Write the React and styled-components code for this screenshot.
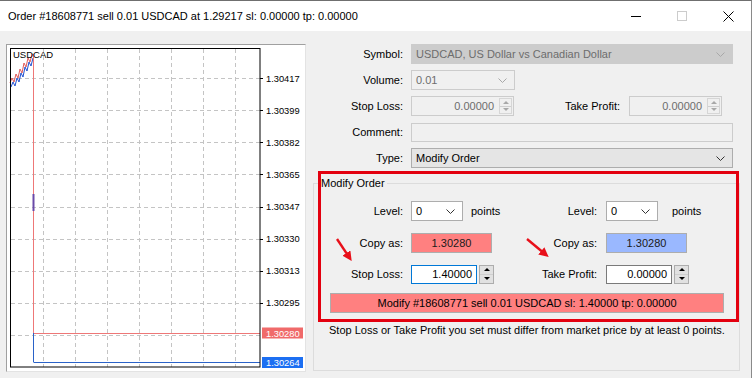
import React from "react";
import styled, { createGlobalStyle } from "styled-components";

const Global = createGlobalStyle`
  html, body {
    margin: 0;
    padding: 0;
  }
  body {
    font-family: "Liberation Sans", Arial, sans-serif;
    font-size: 11px;
    color: #000;
    background: #ffffff;
  }
`;

const gridY = [0, 1, 2, 3, 4, 5, 6, 7, 8].map((k) => 33.3 + 32.05 * k);
const gridX = [36, 68, 100, 132, 164, 196, 228];
const prices = ["1.30417", "1.30399", "1.30382", "1.30365", "1.30347", "1.30330", "1.30313", "1.30295"];

const redZig = "3,38 5,33 7,37 9,29 11,33 13,24 15,28 17,18 19,22 21,13 23,17 25,9";
const blueZig = "4,42 6,37 8,41 10,33 12,37 14,28 16,32 18,22 20,26 22,17 24,21 26,13";

const Chevron = ({ color = "#333" }) => (
  <svg width="9" height="5" viewBox="0 0 9 5">
    <polyline points="0.5,0.5 4.5,4.5 8.5,0.5" fill="none" stroke={color} strokeWidth="1" />
  </svg>
);

const Arrow = ({ left, top, w, h }) => (
  <ArrowWrap style={{ left, top }}>
    <svg width={w + 6} height={h + 6} viewBox={`-3 -3 ${w + 6} ${h + 6}`}>
      <defs>
        <marker id={`ah${left}`} markerWidth="4" markerHeight="4" refX="2" refY="2" orient="auto">
          <path d="M0,0 L4,2 L0,4 Z" fill="#e8101a" />
        </marker>
      </defs>
      <line x1="0" y1="0" x2={w - 4} y2={h - 5} stroke="#e8101a" strokeWidth="2.4" markerEnd={`url(#ah${left})`} />
    </svg>
  </ArrowWrap>
);

const SpinButtons = ({ disabled }) => (
  <Spin $disabled={disabled}>
    <SpinHalf><TriUp $disabled={disabled} /></SpinHalf>
    <SpinHalf><TriDown $disabled={disabled} /></SpinHalf>
  </Spin>
);

const App = () => {
  return (
    <>
      <Global />
      <Window>
        <TitleBar>
          <Title>Order #18608771 sell 0.01 USDCAD at 1.29217 sl: 0.00000 tp: 0.00000</Title>
          <WinButtons>
            <WinBtn>
              <svg width="10" height="10"><line x1="0" y1="5.5" x2="10" y2="5.5" stroke="#000" /></svg>
            </WinBtn>
            <WinBtn>
              <svg width="10" height="10"><rect x="0.5" y="0.5" width="9" height="9" fill="none" stroke="#cccccc" /></svg>
            </WinBtn>
            <WinBtn>
              <svg width="11" height="11">
                <line x1="0.5" y1="0.5" x2="10.5" y2="10.5" stroke="#000" />
                <line x1="10.5" y1="0.5" x2="0.5" y2="10.5" stroke="#000" />
              </svg>
            </WinBtn>
          </WinButtons>
        </TitleBar>

        <Body>
          <ChartFrame>
            <svg width="298" height="326" viewBox="0 0 298 326">
              <rect x="0" y="0" width="298" height="326" fill="#ffffff" />
              {gridY.map((y) => (
                <line key={`h${y}`} x1="4" x2="253" y1={Math.round(y) + 0.5} y2={Math.round(y) + 0.5} stroke="#c4c4c4" strokeDasharray="4 3" />
              ))}
              {gridX.map((x) => (
                <line key={`v${x}`} x1={x + 0.5} x2={x + 0.5} y1="4" y2="322" stroke="#c4c4c4" strokeDasharray="4 3" />
              ))}
              <polyline points={redZig} fill="none" stroke="#e05a5a" strokeWidth="1" />
              <polyline points={blueZig} fill="none" stroke="#2050d0" strokeWidth="1" />
              <line x1="26.5" x2="26.5" y1="9" y2="288" stroke="#ee7777" />
              <line x1="26.5" x2="253" y1="288.5" y2="288.5" stroke="#ee7777" />
              <line x1="26.5" x2="26.5" y1="288" y2="317" stroke="#2a62c8" />
              <line x1="26.5" x2="253" y1="317.5" y2="317.5" stroke="#2a62c8" />
              <line x1="26.5" x2="26.5" y1="149" y2="166" stroke="#6a4aa8" strokeWidth="2" />
              <rect x="3.5" y="3.5" width="249.5" height="318.5" fill="none" stroke="#000" />
              {prices.map((p, i) => (
                <g key={p}>
                  <line x1="253" x2="256" y1={Math.round(gridY[i]) + 0.5} y2={Math.round(gridY[i]) + 0.5} stroke="#000" />
                  <text x="259" y={gridY[i] + 3.5} fontSize="9.3" fontFamily="Liberation Sans, Arial, sans-serif" fill="#000">{p}</text>
                </g>
              ))}
              <rect x="255" y="282.5" width="41" height="11" fill="#f06a6a" />
              <text x="259" y="291.5" fontSize="9.3" fontFamily="Liberation Sans, Arial, sans-serif" fill="#fff">1.30280</text>
              <rect x="255" y="312" width="41" height="11" fill="#1c6ff2" />
              <text x="259" y="321" fontSize="9.3" fontFamily="Liberation Sans, Arial, sans-serif" fill="#fff">1.30264</text>
              <text x="6" y="13" fontSize="9.5" fontFamily="Liberation Sans, Arial, sans-serif" fill="#000">USDCAD</text>
            </svg>
          </ChartFrame>

          <Form>
            <FormRow>
              <Label $w={90}>Symbol:</Label>
              <Select $w={322} $variant="disabled">
                <span>USDCAD, US Dollar vs Canadian Dollar</span>
                <Chevron color="#a8a8a8" />
              </Select>
            </FormRow>
            <FormRow>
              <Label $w={90}>Volume:</Label>
              <Select $w={104} $variant="soft">
                <span>0.01</span>
                <Chevron color="#a8a8a8" />
              </Select>
            </FormRow>
            <FormRow>
              <Label $w={90}>Stop Loss:</Label>
              <DisabledSpin $w={103}>
                <SpinText>0.00000</SpinText>
                <SpinButtons disabled />
              </DisabledSpin>
              <Label $w={106} $gap={9}>Take Profit:</Label>
              <DisabledSpin $w={93}>
                <SpinText>0.00000</SpinText>
                <SpinButtons disabled />
              </DisabledSpin>
            </FormRow>
            <FormRow>
              <Label $w={90}>Comment:</Label>
              <TextBox $w={322} />
            </FormRow>
            <FormRow>
              <Label $w={90}>Type:</Label>
              <Select $w={322} $variant="normal">
                <span>Modify Order</span>
                <Chevron color="#333" />
              </Select>
            </FormRow>

            <GroupBox>
              <Legend>Modify Order</Legend>
              <GroupRow $top={12}>
                <Label $w={89}>Level:</Label>
                <FieldCell $w={110} $gap={8}>
                  <Select $w={52} $variant="white">
                    <span>0</span>
                    <Chevron color="#333" />
                  </Select>
                  <span>points</span>
                </FieldCell>
                <Label $w={76} $gap={9}>Level:</Label>
                <FieldCell $gap={14}>
                  <Select $w={52} $variant="white">
                    <span>0</span>
                    <Chevron color="#333" />
                  </Select>
                  <span>points</span>
                </FieldCell>
              </GroupRow>
              <GroupRow $top={12}>
                <Label $w={89}>Copy as:</Label>
                <FieldCell $w={110}>
                  <CopyButton $bg="#ff8080">1.30280</CopyButton>
                </FieldCell>
                <Label $w={76} $gap={9}>Copy as:</Label>
                <FieldCell>
                  <CopyButton $bg="#9ab8ff">1.30280</CopyButton>
                </FieldCell>
              </GroupRow>
              <GroupRow $top={11}>
                <Label $w={89}>Stop Loss:</Label>
                <FieldCell $w={110} $gap={2}>
                  <Input $focused>1.40000</Input>
                  <SpinButtons />
                </FieldCell>
                <Label $w={76} $gap={9}>Take Profit:</Label>
                <FieldCell $gap={2}>
                  <Input>0.00000</Input>
                  <SpinButtons />
                </FieldCell>
              </GroupRow>
              <ModifyButton>Modify #18608771 sell 0.01 USDCAD sl: 1.40000 tp: 0.00000</ModifyButton>
              <Note>Stop Loss or Take Profit you set must differ from market price by at least 0 points.</Note>
            </GroupBox>

            <Highlight />
            <Arrow left={24} top={195} w={16} h={23} />
            <Arrow left={214} top={195} w={22} h={20} />
          </Form>
        </Body>
      </Window>
    </>
  );
};

export default App;

const Window = styled.div`
  width: 752px;
  height: 378px;
  box-sizing: border-box;
  border-top: 1px solid #6f6f6f;
  border-right: 1px solid #8a8a8a;
  display: flex;
  flex-direction: column;
  overflow: hidden;
`;

const TitleBar = styled.div`
  height: 30px;
  flex-shrink: 0;
  background: #ffffff;
  display: flex;
  align-items: center;
  padding-left: 8px;
`;

const Title = styled.div`
  flex: 1;
  font-size: 11px;
  color: #000;
  white-space: nowrap;
`;

const WinButtons = styled.div`
  display: flex;
  height: 100%;
`;

const WinBtn = styled.div`
  width: 46px;
  height: 100%;
  display: flex;
  align-items: center;
  justify-content: center;
  svg {
    display: block;
  }
`;

const Body = styled.div`
  flex: 1;
  background: #f0f0f0;
  display: flex;
  align-items: flex-start;
  padding: 13px 0 0 6px;
  gap: 7px;
`;

const ChartFrame = styled.div`
  width: 300px;
  height: 328px;
  box-sizing: border-box;
  border: 1px solid #a0a0a0;
  border-right-color: #e3e3e3;
  border-bottom-color: #e3e3e3;
  background: #ffffff;
  svg {
    display: block;
  }
`;

const Form = styled.div`
  position: relative;
  width: 427px;
  display: flex;
  flex-direction: column;
`;

const FormRow = styled.div`
  display: flex;
  align-items: center;
  height: 20px;
  margin-bottom: 6px;
`;

const Label = styled.div`
  width: ${(p) => p.$w}px;
  flex-shrink: 0;
  box-sizing: border-box;
  text-align: right;
  margin-right: ${(p) => p.$gap || 8}px;
  white-space: nowrap;
`;

const selectStyles = {
  disabled: "background:#cccccc;border-color:#cccccc;color:#6d6d6d;",
  soft: "background:#f0f0f0;border-color:#cccccc;color:#6d6d6d;",
  normal: "background:#e5e5e5;border-color:#adadad;color:#000;",
  white: "background:#ffffff;border-color:#adadad;color:#000;",
};

const Select = styled.div`
  width: ${(p) => p.$w}px;
  height: 20px;
  box-sizing: border-box;
  border: 1px solid;
  ${(p) => selectStyles[p.$variant]}
  display: flex;
  align-items: center;
  justify-content: space-between;
  padding: 0 7px 0 4px;
  flex-shrink: 0;
  svg {
    display: block;
  }
`;

const DisabledSpin = styled.div`
  width: ${(p) => p.$w}px;
  height: 20px;
  box-sizing: border-box;
  border: 1px solid #cccccc;
  background: #f0f0f0;
  display: flex;
  align-items: center;
  justify-content: flex-end;
  padding-right: 1px;
  gap: 5px;
  flex-shrink: 0;
`;

const SpinText = styled.span`
  color: #6d6d6d;
`;

const TextBox = styled.div`
  width: ${(p) => p.$w}px;
  height: 19px;
  box-sizing: border-box;
  border: 1px solid #cccccc;
  background: #f0f0f0;
`;

const Spin = styled.div`
  width: ${(p) => (p.$disabled ? 13 : 15)}px;
  height: ${(p) => (p.$disabled ? 16 : 19)}px;
  box-sizing: border-box;
  border: 1px solid ${(p) => (p.$disabled ? "#d6d6d6" : "#adadad")};
  background: ${(p) => (p.$disabled ? "#f0f0f0" : "#e1e1e1")};
  display: flex;
  flex-direction: column;
`;

const SpinHalf = styled.div`
  flex: 1;
  display: flex;
  align-items: center;
  justify-content: center;
  & + & {
    border-top: 1px solid #cfcfcf;
  }
`;

const TriUp = styled.div`
  width: 0;
  height: 0;
  border-left: 3px solid transparent;
  border-right: 3px solid transparent;
  border-bottom: 3px solid ${(p) => (p.$disabled ? "#a8a8a8" : "#000")};
`;

const TriDown = styled.div`
  width: 0;
  height: 0;
  border-left: 3px solid transparent;
  border-right: 3px solid transparent;
  border-top: 3px solid ${(p) => (p.$disabled ? "#a8a8a8" : "#000")};
`;

const GroupBox = styled.fieldset`
  margin: 3px 0 0 0;
  padding: 0;
  height: 194px;
  box-sizing: border-box;
  border: 1px solid #dcdcdc;
  min-width: 0;
`;

const Legend = styled.legend`
  padding: 0 2px;
  margin-left: 5px;
  line-height: 12px;
  font-size: 11px;
`;

const GroupRow = styled.div`
  display: flex;
  align-items: center;
  height: 20px;
  margin-top: ${(p) => p.$top}px;
`;

const FieldCell = styled.div`
  width: ${(p) => (p.$w ? `${p.$w}px` : "auto")};
  flex-shrink: 0;
  display: flex;
  align-items: center;
  gap: ${(p) => p.$gap || 0}px;
`;

const CopyButton = styled.div`
  width: 81px;
  height: 20px;
  box-sizing: border-box;
  border: 1px solid #adadad;
  background: ${(p) => p.$bg};
  display: flex;
  align-items: center;
  justify-content: center;
  color: #1a1a1a;
`;

const Input = styled.div`
  width: 66px;
  height: 19px;
  box-sizing: border-box;
  border: 1px solid ${(p) => (p.$focused ? "#0078d7" : "#7a7a7a")};
  background: #ffffff;
  display: flex;
  align-items: center;
  justify-content: flex-end;
  padding-right: 4px;
`;

const ModifyButton = styled.div`
  margin: 9px 0 0 16px;
  width: 394px;
  height: 20px;
  box-sizing: border-box;
  border: 1px solid #adadad;
  background: #ff8080;
  display: flex;
  align-items: center;
  justify-content: center;
`;

const Note = styled.div`
  margin: 11px 0 0 15px;
  line-height: 13px;
  white-space: nowrap;
`;

const Highlight = styled.div`
  position: absolute;
  left: 5px;
  top: 127px;
  width: 421px;
  height: 151px;
  box-sizing: border-box;
  border: 3px solid #e3000f;
  pointer-events: none;
`;

const ArrowWrap = styled.div`
  position: absolute;
  pointer-events: none;
  svg {
    display: block;
    margin: -3px 0 0 -3px;
  }
`;
